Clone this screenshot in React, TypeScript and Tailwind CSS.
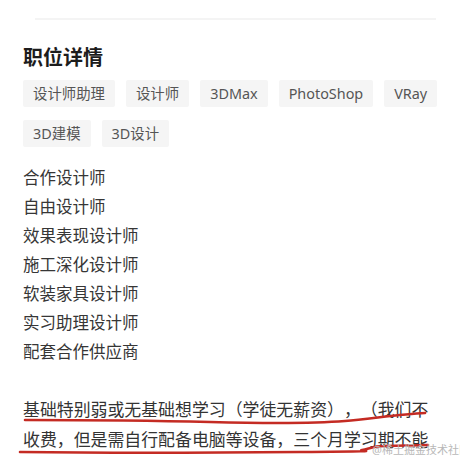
import React from 'react';

const tags = ['设计师助理', '设计师', '3DMax', 'PhotoShop', 'VRay', '3D建模', '3D设计'];

const roles = [
  '合作设计师',
  '自由设计师',
  '效果表现设计师',
  '施工深化设计师',
  '软装家具设计师',
  '实习助理设计师',
  '配套合作供应商',
];

export default function App() {
  return (
    <div
      className="relative w-[460px] h-[460px] overflow-hidden bg-white"
      style={{ fontFamily: '"Noto Sans", "Noto Sans CJK SC", sans-serif' }}
    >
      {/* faint divider from the section above */}
      <div className="mt-[18px] ml-[35px] mr-[24px] h-[2px] bg-[#f4f4f4] blur-[0.5px]" />

      <div className="px-[23px]">
        {/* Heading */}
        <h2 className="mt-[24px] h-[28px] leading-[28px] text-[20px] font-bold text-[#1c1c1c]">职位详情</h2>

        {/* Tags */}
        <div className="mt-[8px] flex flex-wrap gap-x-[11px] gap-y-[13px] w-[420px]">
          {tags.map((t) => (
            <span
              key={t}
              className="h-[27px] px-[10px] flex items-center rounded-[2px] bg-[#f5f5f5] text-[14.4px] text-[#555]"
            >
              {t}
            </span>
          ))}
        </div>

        {/* Roles */}
        <ul className="mt-[16px]">
          {roles.map((r) => (
            <li key={r} className="h-[29px] leading-[29px] text-[16.5px] text-[#363636]">
              {r}
            </li>
          ))}
        </ul>
      </div>

      {/* Underlined note */}
      <div className="relative mt-[29px] px-[23px]">
        <p className="text-[16.9px] leading-[30px] text-[#333] whitespace-nowrap [text-spacing-trim:space-all]">
          基础特别弱或无基础想学习（学徒无薪资），（我们不
          <br />
          收费，但是需自行配备电脑等设备，三个月学习期不能
        </p>
        <svg className="absolute left-0 top-0 overflow-visible" width="460" height="60" viewBox="0 0 460 60" fill="none">
          <path
            d="M25 25 C 80 25, 130 25, 210 27 S 320 28, 345 26 S 400 19, 425 18"
            stroke="#c42b23"
            strokeWidth="2.6"
            strokeLinecap="round"
          />
          <path
            d="M20 57 C 90 58, 200 58, 300 57 S 355 56, 362 55 S 372 51, 385 51 L 428 50"
            stroke="#c42b23"
            strokeWidth="2.6"
            strokeLinecap="round"
          />
        </svg>
      </div>

      {/* watermark */}
      <div className="absolute left-[372px] top-[443px] text-[11px] leading-[14px] text-[#b8b8b8] whitespace-nowrap">
        @稀土掘金技术社区
      </div>
    </div>
  );
}
